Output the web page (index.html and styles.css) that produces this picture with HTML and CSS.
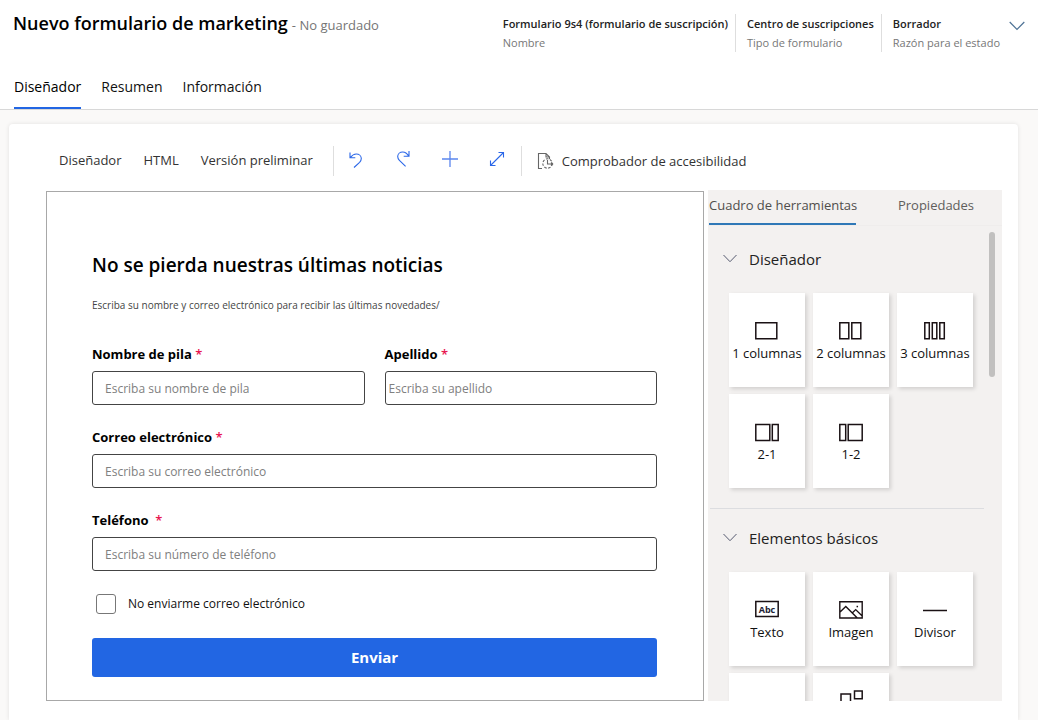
FILE: index.html
```
<!DOCTYPE html>
<html lang="es">
<head>
<meta charset="utf-8">
<meta name="viewport" content="width=device-width, initial-scale=1">
<title>Nuevo formulario de marketing</title>
<link rel="stylesheet" href="styles.css">
</head>
<body>
<div class="page">
  <header class="header">
    <div class="header-top">
      <div class="title-row">
        <h1 class="title">Nuevo formulario de marketing</h1>
        <span class="unsaved">- No guardado</span>
      </div>
      <div class="facts">
        <div class="fact"><span class="fact-value">Formulario 9s4 (formulario de suscripción)</span><span class="fact-name">Nombre</span></div>
        <div class="fact"><span class="fact-value">Centro de suscripciones</span><span class="fact-name">Tipo de formulario</span></div>
        <div class="fact"><span class="fact-value">Borrador</span><span class="fact-name">Razón para el estado</span></div>
        <button class="icon-button expand" type="button" aria-label="Expandir encabezado">
          <svg width="16" height="10" viewBox="0 0 16 10" fill="none" stroke="#4f7396" stroke-width="1.2"><path d="M.7 1l7.3 7.5L15.3 1"/></svg>
        </button>
      </div>
    </div>
    <nav class="tabs">
      <a class="tab tab-active" href="#disenador">Diseñador</a>
      <a class="tab" href="#resumen">Resumen</a>
      <a class="tab" href="#informacion">Información</a>
    </nav>
  </header>

  <main class="card" id="disenador">
    <div class="toolbar">
      <div class="modes">
        <button class="mode" type="button">Diseñador</button>
        <button class="mode" type="button">HTML</button>
        <button class="mode" type="button">Versión preliminar</button>
      </div>
      <div class="actions">
        <button class="icon-button" type="button" aria-label="Deshacer">
          <svg width="16" height="18" viewBox="0 0 16 18" fill="none" stroke="#2b67e8" stroke-width="1.1"><path d="M2 2.5v5.3h5.3M2.2 7.6C4 5.4 5.800 4 8.200 4c3 0 5.100 2 5.100 4.600 0 1.600-.7 2.700-1.700 3.700L6 17.500"/></svg>
        </button>
        <button class="icon-button" type="button" aria-label="Rehacer">
          <svg width="16" height="18" viewBox="0 0 16 18" fill="none" stroke="#2b67e8" stroke-width="1.1"><path d="M14 1v5.300H8.700M13.800 6.100C12.100 3.500 10.200 2 7.800 2 4.800 2 2.700 4 2.700 6.600c0 1.600.7 2.700 1.700 3.700l6.200 6"/></svg>
        </button>
        <button class="icon-button" type="button" aria-label="Agregar">
          <svg width="16" height="18" viewBox="0 0 16 18" fill="none" stroke="#5b86ee" stroke-width="1.300"><path d="M8 1v16M0 9h16"/></svg>
        </button>
        <button class="icon-button" type="button" aria-label="Ampliar">
          <svg width="16" height="18" viewBox="0 0 16 18" fill="none" stroke="#2b67e8" stroke-width="1.100"><path d="M1.500 15.500l13-13M9.500 2.500h5v5M1.500 10.500v5h5"/></svg>
        </button>
      </div>
      <button class="checker" type="button">
        <svg width="18" height="18" viewBox="0 0 18 18" fill="none" stroke="#666" stroke-width="1.100"><path d="M5 16.500H1.500v-15h7.500l3.500 3.500v2M9 1.500V5h3.500"/><circle cx="10.500" cy="11.500" r="4.700" stroke-dasharray="2.500 1.500"/><path d="M10.500 8v4h5M14 10.500l1.700 1.500L14 13.500"/></svg>
        <span>Comprobador de accesibilidad</span>
      </button>
    </div>

    <div class="workspace">
      <form class="canvas">
        <h2 class="form-title">No se pierda nuestras últimas noticias</h2>
        <p class="form-intro">Escriba su nombre y correo electrónico para recibir las últimas novedades/</p>
        <div class="field-row">
          <div class="field">
            <label class="label" for="nombre">Nombre de pila <span class="required">*</span></label>
            <input class="input" id="nombre" type="text" placeholder="Escriba su nombre de pila">
          </div>
          <div class="field">
            <label class="label" for="apellido">Apellido <span class="required">*</span></label>
            <input class="input input-tight" id="apellido" type="text" placeholder="Escriba su apellido">
          </div>
        </div>
        <div class="field">
          <label class="label" for="correo">Correo electrónico <span class="required">*</span></label>
          <input class="input" id="correo" type="email" placeholder="Escriba su correo electrónico">
        </div>
        <div class="field">
          <label class="label" for="telefono">Teléfono &nbsp;<span class="required">*</span></label>
          <input class="input" id="telefono" type="tel" placeholder="Escriba su número de teléfono">
        </div>
        <div class="check-row">
          <input class="checkbox" id="no-enviar" type="checkbox">
          <label class="check-label" for="no-enviar">No enviarme correo electrónico</label>
        </div>
        <button class="submit" type="button">Enviar</button>
      </form>

      <aside class="panel">
        <div class="panel-tabs">
          <button class="panel-tab panel-tab-active" type="button">Cuadro de herramientas</button>
          <button class="panel-tab" type="button">Propiedades</button>
        </div>
        <div class="panel-body">
          <section class="section">
            <button class="section-head" type="button">
              <svg width="14" height="10" viewBox="0 0 14 10" fill="none" stroke="#555a70"><path d="M.5 1L7 7.700 13.500 1"/></svg>
              <span>Diseñador</span>
            </button>
            <div class="tiles">
              <button class="tile" type="button">
                <svg width="24" height="20" viewBox="0 0 24 20" fill="none" stroke="#1a1114" stroke-width="1.500"><path d="M.8 1.800h21v16H.8z"/></svg>
                <span>1 columnas</span>
              </button>
              <button class="tile" type="button">
                <svg width="24" height="20" viewBox="0 0 24 20" fill="none" stroke="#1a1114" stroke-width="1.500"><path d="M.8 1.800h9v16h-9zM12.800 1.800h9v16h-9z"/></svg>
                <span>2 columnas</span>
              </button>
              <button class="tile" type="button">
                <svg width="24" height="20" viewBox="0 0 24 20" fill="none" stroke="#1a1114" stroke-width="1.500"><path d="M1.800 1.800h4.500v16H1.800zM9.300 1.800h4.500v16H9.300zM16.800 1.800h4.500v16h-4.500z"/></svg>
                <span>3 columnas</span>
              </button>
              <button class="tile" type="button">
                <svg width="24" height="20" viewBox="0 0 24 20" fill="none" stroke="#1a1114" stroke-width="1.500"><path d="M.8 2.500h14v16H.8zM17.300 2.500h5.900v16h-5.900z"/></svg>
                <span>2-1</span>
              </button>
              <button class="tile" type="button">
                <svg width="24" height="20" viewBox="0 0 24 20" fill="none" stroke="#1a1114" stroke-width="1.500"><path d="M.8 2.500h5.900v16H.8zM9.200 2.500h14v16h-14z"/></svg>
                <span>1-2</span>
              </button>
            </div>
          </section>
          <section class="section">
            <button class="section-head" type="button">
              <svg width="14" height="10" viewBox="0 0 14 10" fill="none" stroke="#555a70"><path d="M.5 1L7 7.700 13.500 1"/></svg>
              <span>Elementos básicos</span>
            </button>
            <div class="tiles">
              <button class="tile" type="button">
                <svg width="24" height="20" viewBox="0 0 24 20"><path d="M.8 1.500h22.400v15H.8z" fill="none" stroke="#1a1114" stroke-width="1.500"/><text class="icon-text" x="12" y="13" text-anchor="middle">Abc</text></svg>
                <span>Texto</span>
              </button>
              <button class="tile" type="button">
                <svg width="24" height="20" viewBox="0 0 24 20" fill="none" stroke="#1a1114" stroke-width="1.400"><path d="M.8 1.800h22.400V18H.8zM.8 12.300l6-5.800L18.300 18M13.200 12.900l3.500-3.300 6.500 6.300"/><path d="M18.300 5.800v1.500" stroke-width="1.500"/></svg>
                <span>Imagen</span>
              </button>
              <button class="tile" type="button">
                <svg width="24" height="20" viewBox="0 0 24 20" fill="none" stroke="#1a1114" stroke-width="1.500"><path d="M0 10.500h24"/></svg>
                <span>Divisor</span>
              </button>
              <button class="tile" type="button" aria-label="Botón"></button>
              <button class="tile tile-tall" type="button" aria-label="Bloque de contenido">
                <svg width="24" height="24" viewBox="0 0 24 24" fill="none" stroke="#1a1114" stroke-width="1.500"><path d="M2 4h9.500v9.500H2zM15.500 1h7.700v7.700h-7.700zM2 16h9.500v7H2zM14.500 12.500h7v7h-7z"/></svg>
              </button>
            </div>
          </section>
          <div class="scroll-thumb"></div>
        </div>
      </aside>
    </div>
  </main>
</div>
</body>
</html>
```
FILE: styles.css
```
* {
  box-sizing: border-box;
}

body {
  margin: 0;
  background: #faf9f8;
  color: #111;
  font-family: "Open Sans", "Noto Sans", sans-serif;
  font-size: 13px;
}

button {
  border: 0;
  padding: 0;
  background: none;
  color: inherit;
  font: inherit;
  cursor: pointer;
}

svg {
  display: block;
  flex: none;
}

.page {
  display: flex;
  flex-direction: column;
  height: 100vh;
}

/* Header */
.header {
  display: flex;
  flex-direction: column;
  justify-content: space-between;
  height: 110px;
  flex: none;
  background: #fff;
  border-bottom: 1px solid #d8d8d8;
  white-space: nowrap;
}

.header-top {
  display: flex;
  justify-content: space-between;
  padding: 8px 13px 0;
}

.title-row {
  display: flex;
  align-items: baseline;
  gap: 4px;
}

.title {
  margin: 0;
  color: #000;
  font-size: 18px;
  font-weight: 600;
  line-height: 30px;
}

.unsaved {
  color: #757575;
  font-size: 13px;
}

.facts {
  display: flex;
  align-items: flex-start;
  padding-top: 6px;
}

.fact {
  display: flex;
  flex-direction: column;
  height: 38px;
  padding: 0 7px 0 11px;
  font-size: 11px;
  line-height: 19px;
}

.fact + .fact {
  border-left: 1px solid #dedede;
}

.fact:nth-child(3) {
  padding-right: 9px;
}

.fact-value {
  color: #222;
  font-weight: 600;
}

.fact-name {
  color: #777;
}

.expand {
  padding-top: 7px;
}

.tabs {
  display: flex;
  gap: 20px;
  padding-left: 14px;
}

.tab {
  padding-bottom: 8px;
  border-bottom: 2px solid transparent;
  color: #111;
  font-size: 14px;
  line-height: 24px;
  text-decoration: none;
}

.tab-active {
  border-color: #2266e3;
  color: #000;
}

/* Designer card */
.card {
  display: flex;
  flex: 1;
  flex-direction: column;
  min-height: 0;
  margin: 14px 20px 0 9px;
  padding: 0 16px 19px 37px;
  background: #fff;
  border-radius: 4px 4px 0 0;
  box-shadow: 0 0 4px rgba(0, 0, 0, 0.1);
}

.toolbar {
  display: flex;
  align-items: center;
  height: 66px;
  padding: 8px 0 1px 13px;
  flex: none;
  color: #333;
  white-space: nowrap;
}

.modes,
.actions {
  display: flex;
  align-items: center;
  height: 30px;
  border-right: 1px solid #dedede;
}

.modes {
  gap: 22px;
  padding: 0 20px 2px 0;
}

.actions {
  gap: 31px;
  padding: 0 16px 4px 14px;
}

.checker {
  display: flex;
  align-items: center;
  gap: 7px;
  padding-left: 15px;
}

.workspace {
  display: flex;
  flex: 1;
  gap: 4px;
  min-height: 0;
}

/* Form canvas */
.canvas {
  flex: 1;
  margin-top: 1px;
  padding: 58px 46px 0 45px;
  border: 1px solid #a8a8a8;
}

.form-title {
  margin: 0;
  color: #000;
  font-size: 19px;
  font-weight: 600;
  line-height: 30px;
}

.form-intro {
  margin: 16px 0 30px;
  color: #444;
  font-size: 10px;
  line-height: 18px;
}

.field-row {
  display: flex;
  gap: 20px;
}

.field {
  flex: 1;
  margin-bottom: 22px;
}

.label {
  display: block;
  padding-bottom: 7px;
  color: #000;
  font-weight: 700;
  line-height: 20px;
}

.required {
  color: #e8164f;
  font-weight: 600;
}

.input {
  display: block;
  width: 100%;
  height: 34px;
  padding: 0 12px;
  border: 1px solid #444;
  border-radius: 3px;
  background: #fff;
  color: #222;
  font: inherit;
  font-size: 12px;
}

.input-tight {
  padding: 0 3px;
}

.input::placeholder {
  color: #808080;
  opacity: 1;
}

.check-row {
  display: flex;
  align-items: center;
  gap: 12px;
  padding: 1px 0 0 4px;
}

.checkbox {
  width: 20px;
  height: 20px;
  margin: 0;
  border: 1px solid #777;
  border-radius: 3px;
  appearance: none;
  background: #fff;
}

.checkbox:checked {
  background: #2266e3;
}

.check-label {
  font-size: 12px;
  line-height: 20px;
}

.submit {
  width: 100%;
  height: 39px;
  margin-top: 24px;
  padding-bottom: 2px;
  border-radius: 3px;
  background: #2266e3;
  color: #fff;
  font-size: 15px;
  font-weight: 700;
}

/* Toolbox panel */
.panel {
  display: flex;
  flex-direction: column;
  width: 294px;
  flex: none;
  overflow: hidden;
  background: #f3f1f0;
}

.panel-tabs {
  display: flex;
  height: 36px;
  flex: none;
  padding-left: 1px;
  border-bottom: 1px solid #efedec;
  color: #605e5c;
}

.panel-tab {
  flex: 1;
  padding: 0 0 5px 14px;
  white-space: nowrap;
}

.panel-tab-active {
  flex: none;
  width: 147px;
  padding: 0 0 3px;
  border-bottom: 2px solid #2f78b7;
  color: #504e4c;
}

.panel-body {
  position: relative;
  padding: 4px 18px 0 2px;
}

.section + .section {
  border-top: 1px solid #dcdde0;
}

.section-head {
  display: flex;
  align-items: center;
  gap: 12px;
  width: 100%;
  height: 58px;
  padding-left: 13px;
  color: #222;
  font-size: 15px;
}

.tiles {
  display: grid;
  grid-template-columns: repeat(3, 76px);
  grid-auto-rows: 94px;
  gap: 7px 8px;
  padding: 5px 0 20px 19px;
}

.tile {
  display: flex;
  flex-direction: column;
  align-items: center;
  padding-top: 28px;
  background: #fff;
  box-shadow: 2px 2px 4px rgba(0, 0, 0, 0.14);
  line-height: 24px;
  white-space: nowrap;
}

.tile-tall {
  padding-top: 17px;
}

.icon-text {
  fill: #223;
  font-size: 9px;
  font-weight: 700;
}

.scroll-thumb {
  position: absolute;
  top: 6px;
  right: 7px;
  width: 6px;
  height: 145px;
  border-radius: 3px;
  background: #c1c0bf;
}
```
